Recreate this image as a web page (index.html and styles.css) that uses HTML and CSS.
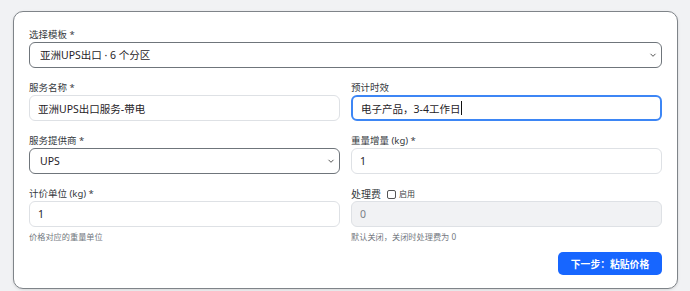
FILE: index.html
```html
<!DOCTYPE html>
<html lang="zh">
<head>
<meta charset="utf-8">
<link rel="stylesheet" href="styles.css">
</head>
<body>
<div class="card">
  <div class="field full">
    <label class="lbl">选择模板 *</label>
    <select class="ctl sel"><option>亚洲UPS出口 · 6 个分区</option></select>
  </div>
  <div class="grid">
    <div class="field">
      <label class="lbl">服务名称 *</label>
      <input class="ctl inp" value="亚洲UPS出口服务-带电">
    </div>
    <div class="field">
      <label class="lbl">预计时效</label>
      <div class="ctl inp focus"><span>电子产品，3-4工作日</span><span class="caret"></span></div>
    </div>
    <div class="field">
      <label class="lbl">服务提供商 *</label>
      <select class="ctl sel"><option>UPS</option></select>
    </div>
    <div class="field">
      <label class="lbl">重量增量 (kg) *</label>
      <input class="ctl inp" value="1">
    </div>
    <div class="field">
      <label class="lbl">计价单位 (kg) *</label>
      <input class="ctl inp" value="1">
      <div class="help">价格对应的重量单位</div>
    </div>
    <div class="field">
      <div class="lbl row"><span>处理费</span><label class="chk"><span class="box"></span>启用</label></div>
      <input class="ctl inp dis" value="0" disabled>
      <div class="help">默认关闭，关闭时处理费为 0</div>
    </div>
  </div>
  <div class="actions">
    <button class="btn">下一步：粘贴价格</button>
  </div>
</div>
</body>
</html>
```
FILE: styles.css
```css
* { box-sizing: border-box; }
html, body { margin: 0; padding: 0; }
body {
  background: #f1f2f4;
  font-family: "Noto Sans", "Noto Sans CJK SC", sans-serif;
  color: #2b2f33;
  width: 690px;
  height: 291px;
  overflow: hidden;
}
.card {
  margin: 11px 0 0 13px;
  width: 665px;
  height: 278px;
  background: #fff;
  border: 1px solid #7f8489;
  border-radius: 10px;
  padding: 16px 15px 0 15px;
  box-shadow: 0 1px 3px rgba(0,0,0,0.12);
}
.field { display: flex; flex-direction: column; }
.field.full { margin-bottom: 13px; }
.grid {
  display: grid;
  grid-template-columns: 1fr 1fr;
  column-gap: 11px;
  row-gap: 13px;
}
.lbl {
  font-size: 9.5px;
  line-height: 14px;
  height: 14px;
  color: #34383d;
}
.lbl.row { display: flex; align-items: center; gap: 6px; font-size: 10px; }
.chk { display: flex; align-items: center; gap: 3px; font-size: 8px; color: #3a3e43; }
.box {
  width: 9px; height: 9px;
  border: 1px solid #555;
  border-radius: 2px;
  background: #fff;
}
.ctl {
  height: 26px;
  width: 100%;
  font-family: "Noto Sans", "Noto Sans CJK SC", sans-serif;
  font-size: 10.5px;
  color: #1f2327;
  background: #fff;
  border-radius: 6px;
  outline: none;
  margin: 0;
}
.sel {
  appearance: none;
  -webkit-appearance: none;
  border: 1px solid #6f757b;
  padding: 0 20px 0 10px;
  background-image: url("data:image/svg+xml,%3Csvg xmlns='http://www.w3.org/2000/svg' width='8' height='6' viewBox='0 0 8 6'%3E%3Cpath d='M1.5 1.8 L4 4.3 L6.5 1.8' fill='none' stroke='%23555' stroke-width='1'/%3E%3C/svg%3E");
  background-repeat: no-repeat;
  background-position: right 4px center;
  background-size: 8px 6px;
}
.inp {
  border: 1px solid #dee1e5;
  padding: 0 8px;
}
.inp.focus {
  border: 2px solid #3d86f5;
  padding: 0 8px;
  display: flex;
  align-items: center;
}
.caret {
  display: inline-block;
  width: 1px;
  height: 14px;
  background: #111;
  margin-left: 1px;
}
.inp.dis {
  background: #f1f2f4;
  color: #7b8086;
  -webkit-text-fill-color: #7b8086;
  opacity: 1;
}
.help {
  font-size: 8.2px;
  line-height: 12px;
  margin-top: 4px;
  color: #737880;
}
.actions {
  display: flex;
  justify-content: flex-end;
  margin-top: 9px;
}
.btn {
  width: 104px;
  height: 23px;
  border: none;
  border-radius: 5px;
  background: #1766ff;
  color: #fff;
  font-family: "Noto Sans", "Noto Sans CJK SC", sans-serif;
  font-size: 9.8px;
  font-weight: 600;
  padding: 0;
}
```
